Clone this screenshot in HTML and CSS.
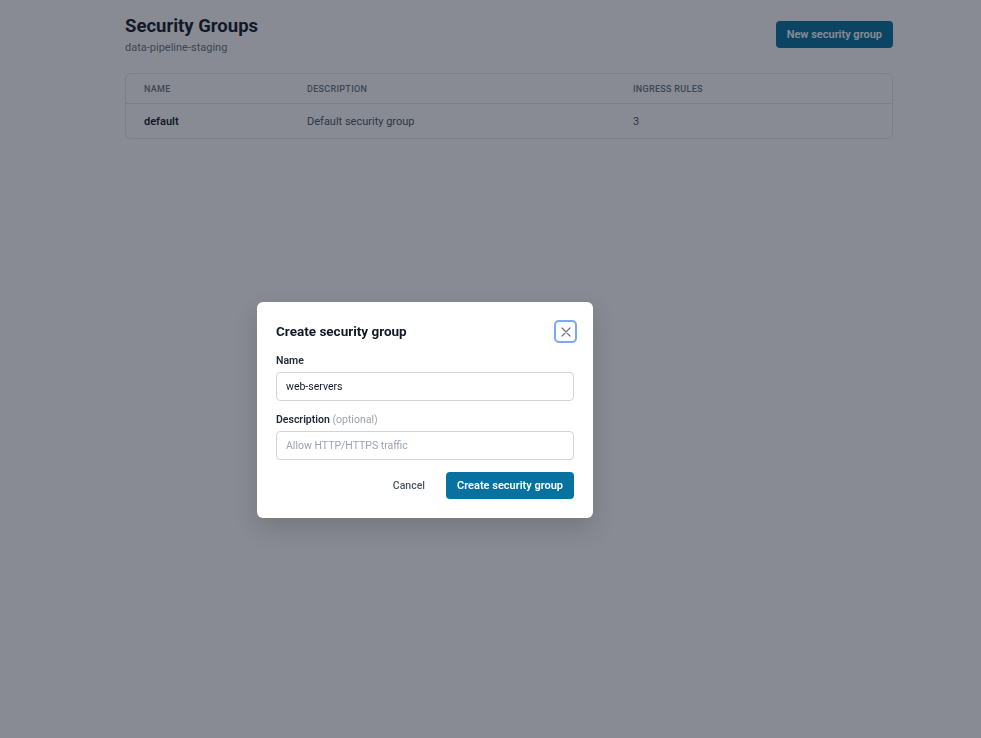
FILE: index.html
```html
<!DOCTYPE html>
<html lang="en">
<head>
    <meta charset="UTF-8">
    <meta name="viewport" content="width=device-width, initial-scale=1.0">
    <title>Security Groups</title>
    <link rel="stylesheet" href="styles.css">
</head>
<body>
    <div class="container">
        <div class="page-header">
            <div>
                <h1>Security Groups</h1>
                <div class="subtitle">data-pipeline-staging</div>
            </div>
            <button class="btn-primary">New security group</button>
        </div>

        <div class="table-card">
            <div class="table-row table-head">
                <div>Name</div>
                <div>Description</div>
                <div>Ingress rules</div>
            </div>
            <div class="table-row">
                <div class="cell-name">default</div>
                <div>Default security group</div>
                <div>3</div>
            </div>
        </div>
    </div>

    <div class="overlay">
        <div class="modal">
            <div class="modal-header">
                <h2>Create security group</h2>
                <button class="close-btn" aria-label="Close">
                    <svg width="10" height="10" viewBox="0 0 10 10" fill="none" stroke="currentColor" stroke-width="1.2" stroke-linecap="round">
                        <path d="M1 1L9 9M9 1L1 9"/>
                    </svg>
                </button>
            </div>
            <form>
                <div class="form-group">
                    <label for="name">Name</label>
                    <input type="text" id="name" value="web-servers">
                </div>
                <div class="form-group">
                    <label for="desc">Description <span class="optional">(optional)</span></label>
                    <input type="text" id="desc" placeholder="Allow HTTP/HTTPS traffic">
                </div>
                <div class="modal-actions">
                    <button type="button" class="btn-cancel">Cancel</button>
                    <button type="submit" class="btn-primary">Create security group</button>
                </div>
            </form>
        </div>
    </div>
</body>
</html>
```

FILE: styles.css
```css
:root {
    --primary-color: #0772a0;
    --text-dark: #111827;
    --text-muted: #4b5563;
    --border-color: #e5e7eb;
}

body {
    font-family: 'Roboto', 'Inter', sans-serif;
    background-color: #ffffff;
    color: var(--text-dark);
    margin: 0;
}

.container {
    width: 768px;
    margin: 0 0 0 125px;
    padding-top: 13px;
}

.page-header {
    display: flex;
    justify-content: space-between;
    align-items: center;
}

h1 {
    font-size: 18.5px;
    line-height: 26px;
    font-weight: 700;
    margin: 0;
}

.subtitle {
    margin-top: 1px;
    font-size: 11px;
    line-height: 16px;
    color: #6b7280;
}

.btn-primary {
    background-color: var(--primary-color);
    color: #fff;
    border: none;
    border-radius: 4px;
    height: 27px;
    padding: 0 11px;
    font-family: inherit;
    font-size: 11px;
    font-weight: 600;
    cursor: pointer;
}

.table-card {
    margin-top: 17px;
    border: 1px solid var(--border-color);
    border-radius: 6px;
}

.table-row {
    display: grid;
    grid-template-columns: 163px 326px 1fr;
    height: 34px;
    align-items: center;
    font-size: 11px;
    color: var(--text-muted);
}

.table-row > div {
    padding-left: 18px;
}

.table-head {
    height: 29px;
    border-bottom: 1px solid var(--border-color);
    font-size: 9px;
    font-weight: 500;
    text-transform: uppercase;
    letter-spacing: 0.3px;
    color: #6b7280;
}

.cell-name {
    font-weight: 600;
    color: var(--text-dark);
}

.overlay {
    position: fixed;
    inset: 0;
    background: rgba(17, 24, 39, 0.5);
    display: flex;
    align-items: flex-start;
    padding: 302px 0 0 257px;
}

.modal {
    width: 336px;
    box-sizing: border-box;
    background: #fff;
    border-radius: 6px;
    padding: 20px 17px 19px 19px;
    box-shadow: 0 10px 25px rgba(0,0,0,0.15);
}

.modal-header {
    display: flex;
    justify-content: space-between;
    align-items: center;
    margin-bottom: 13px;
}

h2 {
    font-size: 13.5px;
    line-height: 17px;
    font-weight: 700;
    margin: 0;
}

.close-btn {
    width: 19px;
    height: 19px;
    margin-right: 1px;
    padding: 0;
    border: none;
    border-radius: 3px;
    background: #fff;
    color: #6b7280;
    display: flex;
    align-items: center;
    justify-content: center;
    box-shadow: 0 0 0 2px #7ea7f5;
}

form {
    margin-right: 2px;
}

.form-group {
    margin-bottom: 12px;
}

label {
    display: block;
    font-size: 10.5px;
    line-height: 14px;
    font-weight: 600;
    color: #1f2937;
    margin-bottom: 4px;
}

.optional {
    font-weight: 400;
    color: #9ca3af;
}

input {
    display: block;
    width: 100%;
    box-sizing: border-box;
    height: 29px;
    padding: 0 9px;
    border: 1px solid #d1d5db;
    border-radius: 4px;
    font-family: inherit;
    font-size: 10.5px;
    color: var(--text-dark);
}

input::placeholder {
    color: #9ca3af;
}

.modal-actions {
    display: flex;
    justify-content: flex-end;
    gap: 10px;
}

.btn-cancel {
    background: none;
    border: none;
    height: 27px;
    padding: 0 11px;
    font-family: inherit;
    font-size: 10.5px;
    font-weight: 500;
    color: var(--text-muted);
    cursor: pointer;
}
```
